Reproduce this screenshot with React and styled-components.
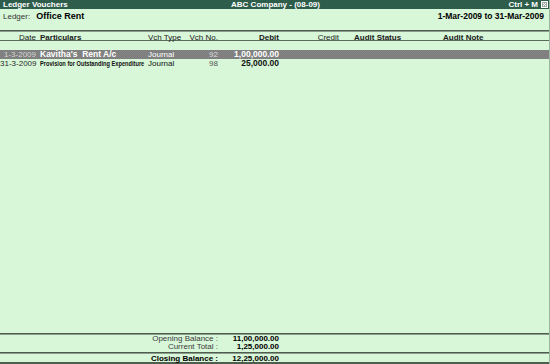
import styled, { createGlobalStyle } from 'styled-components'

const GlobalStyle = createGlobalStyle`
  html, body {
    margin: 0;
    padding: 0;
    background: #d8f6d8;
  }
  body {
    font-family: 'Liberation Sans', Arial, sans-serif;
    font-size: 8px;
    color: #1a1a1a;
  }
`

const Window = styled.div`
  width: 550px;
  height: 364px;
  display: flex;
  flex-direction: column;
  background: #d8f6d8;
  box-sizing: border-box;
  border-right: 1px solid #9fb49f;
  overflow: hidden;
`

const TitleBar = styled.div`
  height: 9px;
  flex: none;
  display: grid;
  grid-template-columns: 1fr auto 1fr;
  align-items: center;
  padding: 0 1px 0 3px;
  background: #2e5d4c;
  color: #ffffff;
  font-weight: bold;
  font-size: 8px;
  line-height: 9px;
`

const TitleRight = styled.div`
  display: flex;
  justify-content: flex-end;
  align-items: center;
  gap: 3px;
`

const LedgerBar = styled.div`
  height: 21px;
  flex: none;
  display: flex;
  justify-content: space-between;
  padding: 3px 5px 0 3px;
  box-sizing: border-box;
  line-height: 9px;
`

const LedgerLabel = styled.span`
  color: #333;
  font-size: 8px;
  margin-right: 6px;
`

const LedgerName = styled.span`
  font-weight: bold;
  font-size: 9px;
  color: #000;
`

const Period = styled.span`
  font-weight: bold;
  font-size: 8.5px;
  color: #000;
`

const Row = styled.div`
  display: grid;
  grid-template-columns: 38px 108px 40px 34px 61px 60px 100px 1fr;
  height: ${(p) => p.$h || 9}px;
  line-height: ${(p) => p.$h || 9}px;
  flex: none;
  white-space: pre;
`

const HeaderRow = styled(Row)`
  border-top: 1px solid #4e5e4e;
  box-shadow: inset 0 1px 0 #8d9d8d;
  border-bottom: 1px solid #5a6a5a;
  height: 11px;
  line-height: 11px;
  box-sizing: border-box;
  padding-top: 1px;
`

const EntryRow = styled(Row)`
  background: ${(p) =>
    p.$active
      ? 'repeating-conic-gradient(#7b7b7b 0 25%, #868686 0 50%) 0 0 / 2px 2px'
      : 'transparent'};
  color: ${(p) => (p.$active ? '#ffffff' : '#111')};
`

const Cell = styled.div`
  overflow: visible;
  text-align: ${(p) => (p.$right ? 'right' : 'left')};
  padding: ${(p) => (p.$right ? '0 2px 0 0' : `0 0 0 ${p.$pl ?? 2}px`)};
  font-weight: ${(p) => (p.$bold ? 'bold' : 'normal')};
  font-size: ${(p) => p.$size || 8}px;
  color: ${(p) => p.$color || 'inherit'};
`

const Narrow = styled.span`
  display: inline-block;
  font-size: 7px;
  font-weight: bold;
  transform: scaleX(0.81);
  transform-origin: left center;
`

const Body = styled.div`
  flex: 1;
  display: flex;
  flex-direction: column;
  padding-top: 9px;
`

const Totals = styled.div`
  flex: none;
  border-top: 1px solid #4e5e4e;
  box-shadow: inset 0 1px 0 #8d9d8d;
  padding: 1px 0 1px;
`

const ClosingRow = styled(Row)`
  border-top: 1px solid #4e5e4e;
  box-shadow: inset 0 1px 0 #8d9d8d;
  border-bottom: 2px solid #4e5e4e;
  height: 12px;
  line-height: 9px;
  box-sizing: border-box;
  padding-top: 1px;
`

const Label = styled.div`
  grid-column: 1 / 5;
  text-align: right;
  padding-right: 2px;
  font-weight: ${(p) => (p.$bold ? 'bold' : 'normal')};
  color: ${(p) => (p.$bold ? '#000' : '#3c3c3c')};
`

const Amount = styled.div`
  text-align: right;
  padding-right: 2px;
  font-weight: bold;
  font-size: 8px;
  color: #000;
`

function CloseBox() {
  return (
    <svg width="7" height="7" viewBox="0 0 7 7">
      <rect x="0.5" y="0.5" width="6" height="6" fill="#9aa79f" stroke="#ffffff" />
      <path d="M2 2 L5 5 M5 2 L2 5" stroke="#ffffff" strokeWidth="1" />
    </svg>
  )
}

const entries = [
  {
    date: '1-3-2009',
    particulars: "Kavitha's  Rent A/c",
    type: 'Journal',
    no: '92',
    debit: '1,00,000.00',
    active: true,
  },
  {
    date: '31-3-2009',
    particulars: 'Provision for Outstanding Expenditure',
    narrow: true,
    type: 'Journal',
    no: '98',
    debit: '25,000.00',
  },
]

const totals = [
  { label: 'Opening Balance :', value: '11,00,000.00' },
  { label: 'Current Total :', value: '1,25,000.00' },
]

export default function App() {
  return (
    <>
      <GlobalStyle />
      <Window>
        <TitleBar>
          <span>Ledger Vouchers</span>
          <span>ABC Company - (08-09)</span>
          <TitleRight>
            <span>Ctrl + M</span>
            <CloseBox />
          </TitleRight>
        </TitleBar>
        <LedgerBar>
          <div>
            <LedgerLabel>Ledger:</LedgerLabel>
            <LedgerName>Office Rent</LedgerName>
          </div>
          <Period>1-Mar-2009 to 31-Mar-2009</Period>
        </LedgerBar>
        <HeaderRow>
          <Cell $right>Date</Cell>
          <Cell $bold>Particulars</Cell>
          <Cell>Vch Type</Cell>
          <Cell $right>Vch No.</Cell>
          <Cell $right $bold>Debit</Cell>
          <Cell $right>Credit</Cell>
          <Cell $bold $pl={13}>Audit Status</Cell>
          <Cell $bold>Audit Note</Cell>
        </HeaderRow>
        <Body>
          {entries.map((e) => (
            <EntryRow key={e.no} $active={e.active}>
              <Cell $right $color={e.active ? '#d4d4d4' : '#2a2a2a'}>
                {e.date}
              </Cell>
              <Cell $bold={!e.narrow} $size={e.narrow ? 8 : 8.5}>
                {e.narrow ? <Narrow>{e.particulars}</Narrow> : e.particulars}
              </Cell>
              <Cell>{e.type}</Cell>
              <Cell $right $color={e.active ? '#dcdcdc' : '#555'}>
                {e.no}
              </Cell>
              <Cell $right $bold $size={8.5}>
                {e.debit}
              </Cell>
              <Cell />
              <Cell />
              <Cell />
            </EntryRow>
          ))}
        </Body>
        <Totals>
          {totals.map((t) => (
            <Row key={t.label} $h={8}>
              <Label>{t.label}</Label>
              <Amount>{t.value}</Amount>
            </Row>
          ))}
        </Totals>
        <ClosingRow>
          <Label $bold>Closing Balance :</Label>
          <Amount>12,25,000.00</Amount>
        </ClosingRow>
      </Window>
    </>
  )
}
